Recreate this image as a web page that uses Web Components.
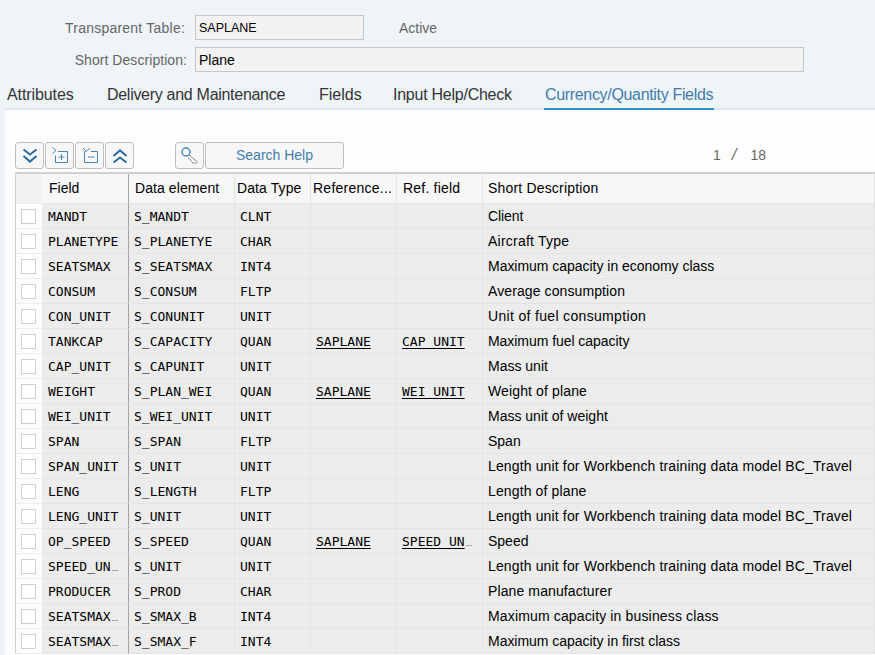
<!DOCTYPE html>
<html>
<head>
<meta charset="utf-8">
<title>SAPLANE</title>
<style>
  html, body { margin: 0; height: 100%; overflow: hidden; }
  body { background: #eff4f9; font-family: "Liberation Sans", Arial, sans-serif; }
</style>
</head>
<body>
<dict-header></dict-header>
<dict-tabs>
  <dict-tab style="width:100px;letter-spacing:-.1px">Attributes</dict-tab>
  <dict-tab style="width:212px;letter-spacing:-.29px">Delivery and Maintenance</dict-tab>
  <dict-tab style="width:74px">Fields</dict-tab>
  <dict-tab style="width:151px;letter-spacing:-.25px">Input Help/Check</dict-tab>
  <dict-tab active style="letter-spacing:-.33px">Currency/Quantity Fields</dict-tab>
</dict-tabs>
<dict-panel></dict-panel>

<script>
const headerTemplate = document.createElement('template');
headerTemplate.innerHTML = `
  <style>
    :host { display: block; height: 86px; box-sizing: border-box; padding-top: 15px; font-size: 14px; }
    .row { display: flex; align-items: center; height: 25px; }
    .row + .row { margin-top: 7px; }
    label { color: #666; text-align: right; white-space: nowrap; }
    .box {
      box-sizing: border-box; height: 25px; margin-left: 8px; padding-left: 3px;
      background: #f2f2f2; border: 1px solid #c6c6c6; color: #000;
      display: flex; align-items: center; font-size: 13px;
    }
    .status { color: #666; margin-left: 35px; }
    .first label { width: 185px; letter-spacing: .22px; }
    .first .box { width: 169px; font-size: 12.5px; margin-left: 10px; }
    .second label { width: 187px; letter-spacing: .06px; }
    .second .box { width: 609px; margin-left: 8px; font-size: 14px; }
  </style>
  <div class="row first"><label>Transparent Table:</label><div class="box">SAPLANE</div><span class="status">Active</span></div>
  <div class="row second"><label>Short Description:</label><div class="box">Plane</div></div>
`;

class DictHeader extends HTMLElement {
  constructor() {
    super();
    this.attachShadow({ mode: 'open' });
    this.shadowRoot.appendChild(headerTemplate.content.cloneNode(true));
  }
}
customElements.define('dict-header', DictHeader);

const tabsTemplate = document.createElement('template');
tabsTemplate.innerHTML = `
  <style>
    :host { display: flex; height: 24px; padding-left: 7px; position: relative; }
    :host::after { content: ''; position: absolute; left: 5px; right: 0; bottom: 0; height: 2px; background: #dce7f4; }
  </style>
  <slot></slot>
`;

class DictTabs extends HTMLElement {
  constructor() {
    super();
    this.attachShadow({ mode: 'open' });
    this.shadowRoot.appendChild(tabsTemplate.content.cloneNode(true));
  }
}
customElements.define('dict-tabs', DictTabs);

const tabTemplate = document.createElement('template');
tabTemplate.innerHTML = `
  <style>
    :host { display: block; box-sizing: border-box; height: 24px; font-size: 16px; line-height: 18px; color: #333; white-space: nowrap; position: relative; z-index: 1; }
    :host([active]) { color: #427cac; border-bottom: 2px solid #2a8fcd; width: 170px; padding-left: 1px; }
  </style>
  <slot></slot>
`;

class DictTab extends HTMLElement {
  constructor() {
    super();
    this.attachShadow({ mode: 'open' });
    this.shadowRoot.appendChild(tabTemplate.content.cloneNode(true));
  }
}
customElements.define('dict-tab', DictTab);

const ICONS = {
  down: '<path d="M3.5 3.500l6.500 5 6.500-5M3.500 10l6.500 5.500 6.500-5.500" fill="none" stroke="#2b6ea6" stroke-width="2.100"/>',
  up: '<path d="M3.500 10l6.500-5.500 6.500 5.500M3.500 16.500l6.500-5 6.500 5" fill="none" stroke="#2b6ea6" stroke-width="2.100"/>',
  add: '<path d="M2.500 1.500l3.500 3-3.500 3M8 5.500h9.500v11h-12V9.500M8.500 11h6M11.500 8v6" fill="none" stroke="#4a86b5" stroke-width="1"/>',
  remove: '<path d="M3 2l3.500 3.500L10 2M11 5.500h6.500v11h-13v-11h1M8 11h6.500" fill="none" stroke="#4a86b5" stroke-width="1"/>',
  key: '<path d="M9 9l8.500 7-2 2-1.500-1.500-1 .5-1.500-1.500-.3-1-3.200-3" fill="#fff" stroke="#7a8a99" stroke-width="1"/><circle cx="6" cy="6" r="4" fill="#fff" stroke="#3f8ccb" stroke-width="1.500"/>'
};

class DictIconButton extends HTMLElement {
  constructor() {
    super();
    const root = this.attachShadow({ mode: 'open' });
    root.innerHTML = `
      <style>
        :host { display: flex; align-items: center; justify-content: center; box-sizing: border-box; width: 29px; height: 27px; background: #f7f7f7; border: 1px solid #bfbfbf; border-radius: 3px; }
        svg { width: 20px; height: 20px; }
      </style>
      <svg viewBox="0 0 20 20">${ICONS[this.getAttribute('icon')]}</svg>
    `;
  }
}
customElements.define('dict-icon-button', DictIconButton);

const panelTemplate = document.createElement('template');
panelTemplate.innerHTML = `
  <style>
    :host { display: block; margin-left: 5px; background: #fdfdfe; padding: 32px 0 0 10px; height: 545px; box-sizing: border-box; }
    .toolbar { display: flex; align-items: center; height: 27px; gap: 1px; margin-bottom: 3px; }
    .spacer { width: 39px; }
    .text-button {
      box-sizing: border-box; width: 139px; height: 27px; padding-bottom: 1px; background: #f7f7f7; border: 1px solid #bfbfbf; border-radius: 3px;
      color: #427cac; font-size: 14px; display: flex; align-items: center; justify-content: center;
    }
    .pager { margin-left: 368px; color: #666; font-size: 14px; white-space: nowrap; display: flex; align-items: center; padding-bottom: 1px; }
    .slash { font-size: 17px; font-style: italic; margin: 0 14px 0 11px; color: #777; }
  </style>
  <div class="toolbar">
    <dict-icon-button icon="down"></dict-icon-button>
    <dict-icon-button icon="add"></dict-icon-button>
    <dict-icon-button icon="remove"></dict-icon-button>
    <dict-icon-button icon="up"></dict-icon-button>
    <div class="spacer"></div>
    <dict-icon-button icon="key"></dict-icon-button>
    <div class="text-button">Search Help</div>
    <div class="pager"><span>1</span><span class="slash">/</span><span>18</span></div>
  </div>
  <dict-table></dict-table>
`;

class DictPanel extends HTMLElement {
  constructor() {
    super();
    this.attachShadow({ mode: 'open' });
    this.shadowRoot.appendChild(panelTemplate.content.cloneNode(true));
  }
}
customElements.define('dict-panel', DictPanel);

// field, data element, type, ref table, ref field, description, letter spacing of the description
const FIELDS = [
  ['MANDT', 'S_MANDT', 'CLNT', '', '', 'Client', -.1],
  ['PLANETYPE', 'S_PLANETYE', 'CHAR', '', '', 'Aircraft Type', .23],
  ['SEATSMAX', 'S_SEATSMAX', 'INT4', '', '', 'Maximum capacity in economy class', -.03],
  ['CONSUM', 'S_CONSUM', 'FLTP', '', '', 'Average consumption', .1],
  ['CON_UNIT', 'S_CONUNIT', 'UNIT', '', '', 'Unit of fuel consumption', .33],
  ['TANKCAP', 'S_CAPACITY', 'QUAN', 'SAPLANE', 'CAP_UNIT', 'Maximum fuel capacity', -.05],
  ['CAP_UNIT', 'S_CAPUNIT', 'UNIT', '', '', 'Mass unit', 0],
  ['WEIGHT', 'S_PLAN_WEI', 'QUAN', 'SAPLANE', 'WEI_UNIT', 'Weight of plane', .13],
  ['WEI_UNIT', 'S_WEI_UNIT', 'UNIT', '', '', 'Mass unit of weight', 0],
  ['SPAN', 'S_SPAN', 'FLTP', '', '', 'Span', 0],
  ['SPAN_UNIT', 'S_UNIT', 'UNIT', '', '', 'Length unit for Workbench training data model BC_Travel', .14],
  ['LENG', 'S_LENGTH', 'FLTP', '', '', 'Length of plane', .13],
  ['LENG_UNIT', 'S_UNIT', 'UNIT', '', '', 'Length unit for Workbench training data model BC_Travel', .14],
  ['OP_SPEED', 'S_SPEED', 'QUAN', 'SAPLANE', 'SPEED_UN|', 'Speed', 0],
  ['SPEED_UN|', 'S_UNIT', 'UNIT', '', '', 'Length unit for Workbench training data model BC_Travel', .14],
  ['PRODUCER', 'S_PROD', 'CHAR', '', '', 'Plane manufacturer', .11],
  ['SEATSMAX|', 'S_SMAX_B', 'INT4', '', '', 'Maximum capacity in business class', .15],
  ['SEATSMAX|', 'S_SMAX_F', 'INT4', '', '', 'Maximum capacity in first class', -.03]
];

const COLUMNS = '27px 87px 106px 76px 86px 86px 1fr';

const tableTemplate = document.createElement('template');
tableTemplate.innerHTML = `
  <style>
    :host { display: block; width: 860px; border-top: 2px solid #d0d0d0; }
    .grid { display: grid; grid-template-columns: ${COLUMNS}; grid-auto-rows: 25px; }
    .grid > div { box-sizing: border-box; white-space: nowrap; overflow: hidden; display: flex; align-items: center; border-right: 1px solid #e4e4e4; border-bottom: 1px solid #e4e4e4; min-width: 0; }
    .headrow { grid-auto-rows: 30px; }
    .head { background: #f7f7f7; font-size: 14px; color: #000; padding: 0 0 2px 6px; }
    .sel { background: #fdfdfe; justify-content: center; padding-right: 1px; border-right: 0 !important; border-left: 1px solid #d0d0d0; border-bottom-color: #eee !important; }
    .head.sel { background: #f2f2f2; }
    .cell { background: #ececec; font-family: "DejaVu Sans Mono", monospace; font-size: 13px; color: #000; padding-left: 5px; }
    .text { font-family: "Liberation Sans", Arial, sans-serif; font-size: 14px; }
    .field { border-right: 1px solid #a3a3a3 !important; }
    .cell.field { padding-left: 6px; }
    .cell u { text-underline-offset: 2px; }
    .dots { font-family: "Liberation Sans", Arial, sans-serif; font-size: 8px; margin-left: 1px; }
    .check { width: 15px; height: 15px; box-sizing: border-box; background: #fff; border: 1px solid #cfcfcf; }
  </style>
  <div class="grid headrow" id="head"></div>
  <div class="grid" id="body"></div>
`;

// "|" marks a value the table has cut off
function clipped(value, underline) {
  const cut = value.endsWith('|');
  const text = cut ? value.slice(0, -1) : value;
  return '<span>' + (underline ? `<u>${text}</u>` : text) + (cut ? '<span class="dots">...</span>' : '') + '</span>';
}

class DictTable extends HTMLElement {
  constructor() {
    super();
    const root = this.attachShadow({ mode: 'open' });
    root.appendChild(tableTemplate.content.cloneNode(true));
    const titles = [
      ['Field', 7, 0], ['Data element', 6, .08], ['Data Type', 2, .1],
      ['Reference...', 2, .25], ['Ref. field', 6, .2], ['Short Description', 5, .18]
    ];
    root.getElementById('head').innerHTML = '<div class="head sel"></div>' +
      titles.map((t, i) => `<div class="head${i === 0 ? ' field' : ''}" style="padding-left:${t[1]}px;letter-spacing:${t[2]}px">${t[0]}</div>`).join('');
    root.getElementById('body').innerHTML = FIELDS.map(f => `
      <div class="sel"><span class="check"></span></div>
      <div class="cell field">${clipped(f[0])}</div>
      <div class="cell">${f[1]}</div>
      <div class="cell">${f[2]}</div>
      <div class="cell">${f[3] ? `<u>${f[3]}</u>` : ''}</div>
      <div class="cell">${f[4] ? clipped(f[4], true) : ''}</div>
      <div class="cell text" style="letter-spacing:${f[6]}px">${f[5]}</div>`).join('');
  }
}
customElements.define('dict-table', DictTable);
</script>
</body>
</html>
